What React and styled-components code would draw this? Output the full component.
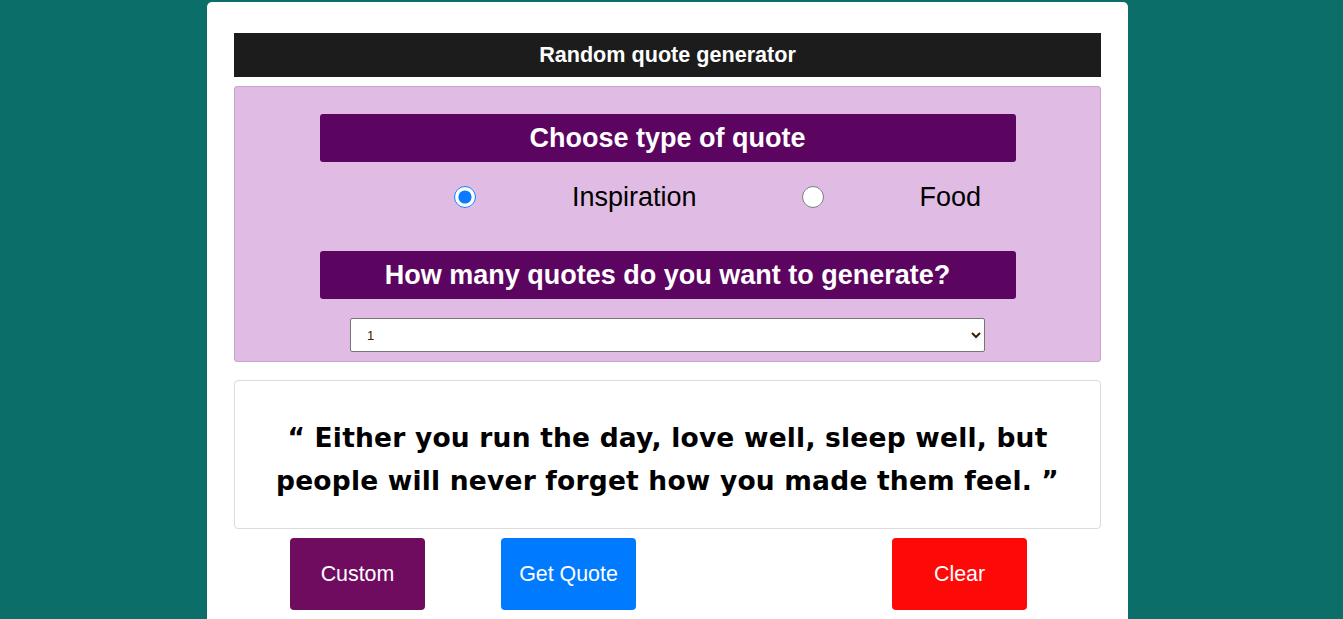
import styled, { createGlobalStyle } from "styled-components";

const GlobalStyle = createGlobalStyle`
  html, body {
    margin: 0;
    padding: 0;
  }
  body {
    background-color: #0b6e69;
    font-family: "Liberation Sans", Arial, sans-serif;
    overflow: hidden;
  }
`;

const Page = styled.div`
  display: flex;
  flex-direction: column;
  align-items: center;
  padding-top: 2px;
`;

const Card = styled.div`
  width: 921px;
  box-sizing: border-box;
  margin-right: 8px;
  background: white;
  border-radius: 5px 5px 0 0;
  padding: 31px 27px 9px 27px;
`;

const Header = styled.div`
  height: 44px;
  background-color: #1c1c1c;
  color: white;
  font-weight: bold;
  font-size: 21.6px;
  display: flex;
  align-items: center;
  justify-content: center;
`;

const Panel = styled.div`
  margin-top: 9px;
  background-color: #e0bce4;
  border: 1px solid #c9a3cc;
  border-radius: 3px;
  padding: 27px 0 9px 0;
  display: flex;
  flex-direction: column;
  align-items: center;
`;

const Banner = styled.div`
  width: 696px;
  height: 48px;
  background-color: #5c0560;
  border-radius: 3px;
  color: white;
  font-weight: bold;
  font-size: 27px;
  display: flex;
  align-items: center;
  justify-content: center;
`;

const RadioRow = styled.div`
  align-self: stretch;
  display: flex;
  align-items: center;
  height: 70px;
  margin-bottom: 19px;
  padding-left: 219px;
`;

const Radio = styled.input`
  width: 22px;
  height: 22px;
  margin: 0;
  accent-color: #0a7aff;
`;

const RadioLabel = styled.label`
  font-size: 27px;
  color: black;
  margin-left: ${(props) => props.gap}px;
  margin-right: ${(props) => props.after}px;
`;

const Select = styled.select`
  margin-top: 19px;
  width: 635px;
  height: 34px;
  font-family: "Liberation Sans", Arial, sans-serif;
  font-size: 13px;
  padding: 0 12px;
  border: 1px solid #767676;
  border-radius: 2px;
  background: white;
  color: #3a2000;
`;

const QuoteBox = styled.div`
  margin-top: 18px;
  height: 149px;
  box-sizing: border-box;
  border: 1px solid #dcdcdc;
  border-radius: 4px;
  display: flex;
  align-items: center;
  justify-content: center;
  padding: 8px 0 0 0;
`;

const QuoteText = styled.p`
  margin: 0;
  max-width: 800px;
  text-align: center;
  font-family: "Comic Sans MS", "DejaVu Sans", sans-serif;
  font-weight: bold;
  font-size: 26.5px;
  line-height: 43px;
  letter-spacing: 0.2px;
  color: black;
`;

const Buttons = styled.div`
  display: flex;
  margin-top: 9px;
  padding-left: 56px;
`;

const Button = styled.button`
  width: 135px;
  height: 72px;
  border: none;
  border-radius: 4px;
  color: white;
  font-family: "Liberation Sans", Arial, sans-serif;
  font-size: 21.4px;
  background-color: ${(props) => props.bg};
  margin-right: ${(props) => props.after || 0}px;
  cursor: pointer;
`;

const Strip = styled.div`
  width: 100%;
  height: 2px;
  background: linear-gradient(90deg, #4a2d6a, #7a5a9a, #4a2d6a, #8a6aa8, #4a2d6a);
`;

const App = () => {
  return (
    <>
      <GlobalStyle />
      <Page>
        <Card>
          <Header>Random quote generator</Header>
          <Panel>
            <Banner>Choose type of quote</Banner>
            <RadioRow>
              <Radio type="radio" name="type" id="insp" defaultChecked />
              <RadioLabel htmlFor="insp" gap={96} after={105}>Inspiration</RadioLabel>
              <Radio type="radio" name="type" id="food" />
              <RadioLabel htmlFor="food" gap={96}>Food</RadioLabel>
            </RadioRow>
            <Banner>How many quotes do you want to generate?</Banner>
            <Select defaultValue="1">
              <option value="1">1</option>
              <option value="2">2</option>
              <option value="3">3</option>
              <option value="4">4</option>
              <option value="5">5</option>
            </Select>
          </Panel>
          <QuoteBox>
            <QuoteText>
              “ Either you run the day, love well, sleep well, but people will never forget how you made them feel. ”
            </QuoteText>
          </QuoteBox>
          <Buttons>
            <Button bg="#6f0c60" after={76}>Custom</Button>
            <Button bg="#007bff" after={256}>Get Quote</Button>
            <Button bg="#ff0808">Clear</Button>
          </Buttons>
        </Card>
        <Strip />
      </Page>
    </>
  );
};

export default App;
